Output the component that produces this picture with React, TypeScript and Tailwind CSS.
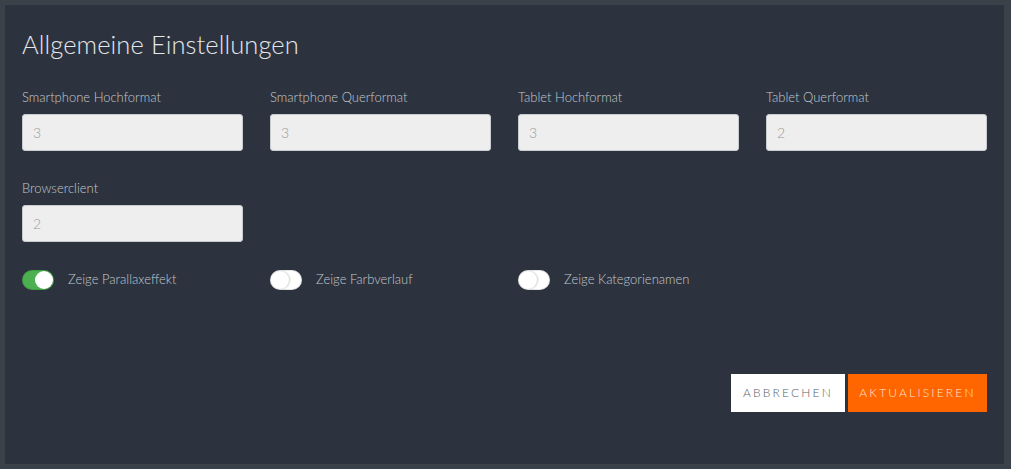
import { useState } from "react";

const fields = [
  { label: "Smartphone Hochformat", value: "3" },
  { label: "Smartphone Querformat", value: "3" },
  { label: "Tablet Hochformat", value: "3" },
  { label: "Tablet Querformat", value: "2" },
];

const Toggle = ({ on, onChange, label }: { on: boolean; onChange: () => void; label: string }) => (
  <button type="button" onClick={onChange} className="flex items-center gap-[14px] text-left">
    <span
      className={`relative h-[20px] w-[32px] rounded-full shadow-[inset_0_0_0_1px_rgba(0,0,0,0.1)] ${
        on ? "bg-[#4caf50]" : "bg-white"
      }`}
    >
      <span
        className={`absolute top-[1px] h-[18px] w-[18px] rounded-full bg-white ${
          on ? "left-[13px]" : "left-[1px] shadow-[1px_0_2px_rgba(0,0,0,0.2)]"
        }`}
      />
    </span>
    <span className="text-[13px] text-[#c3c8cf]">{label}</span>
  </button>
);

const App = () => {
  const [parallax, setParallax] = useState(true);
  const [gradient, setGradient] = useState(false);
  const [categories, setCategories] = useState(false);

  return (
    <div
      className="h-[469px] w-[1011px] bg-[#3a4149] pt-[5px] pl-[5px] pr-[7px] pb-[5px]"
      style={{ fontFamily: "Lato, 'Open Sans', sans-serif" }}
    >
      <div className="flex h-full flex-col bg-[#2c333e] px-[17px] font-light">
        <h1 className="mt-[23px] text-[25.5px] leading-[32px] tracking-[0.1px] text-[#e4e7eb]">
          Allgemeine Einstellungen
        </h1>

        {/* Column counts */}
        <div className="mt-[29px] grid grid-cols-4 gap-x-[27px] gap-y-[29px]">
          {fields.map((f) => (
            <label key={f.label} className="flex flex-col">
              <span className="text-[13px] leading-[16px] text-[#c3c8cf]">{f.label}</span>
              <input
                defaultValue={f.value}
                className="mt-[9px] h-[37px] rounded-[3px] border border-[#c8ccd0] bg-[#eeeeee] px-[10px] text-[14px] font-light text-[#999] outline-none"
              />
            </label>
          ))}
          <label className="flex flex-col">
            <span className="text-[13px] leading-[16px] text-[#c3c8cf]">Browserclient</span>
            <input
              defaultValue="2"
              className="mt-[9px] h-[37px] rounded-[3px] border border-[#c8ccd0] bg-[#eeeeee] px-[10px] text-[14px] font-light text-[#999] outline-none"
            />
          </label>
        </div>

        {/* Switches */}
        <div className="mt-[28px] grid grid-cols-4 gap-x-[27px]">
          <Toggle on={parallax} onChange={() => setParallax(!parallax)} label="Zeige Parallaxeffekt" />
          <Toggle on={gradient} onChange={() => setGradient(!gradient)} label="Zeige Farbverlauf" />
          <Toggle on={categories} onChange={() => setCategories(!categories)} label="Zeige Kategorienamen" />
        </div>

        <div className="mt-[84px] flex justify-end gap-[3px]">
          <button className="h-[38px] w-[114px] bg-white text-[12px] font-light tracking-[2.2px] text-[#596069]">
            ABBRECHEN
          </button>
          <button className="h-[38px] w-[139px] bg-[#ff6600] text-[12px] font-light tracking-[2.2px] text-[#ffe2d0]">
            AKTUALISIEREN
          </button>
        </div>
      </div>
    </div>
  );
};

export default App;
